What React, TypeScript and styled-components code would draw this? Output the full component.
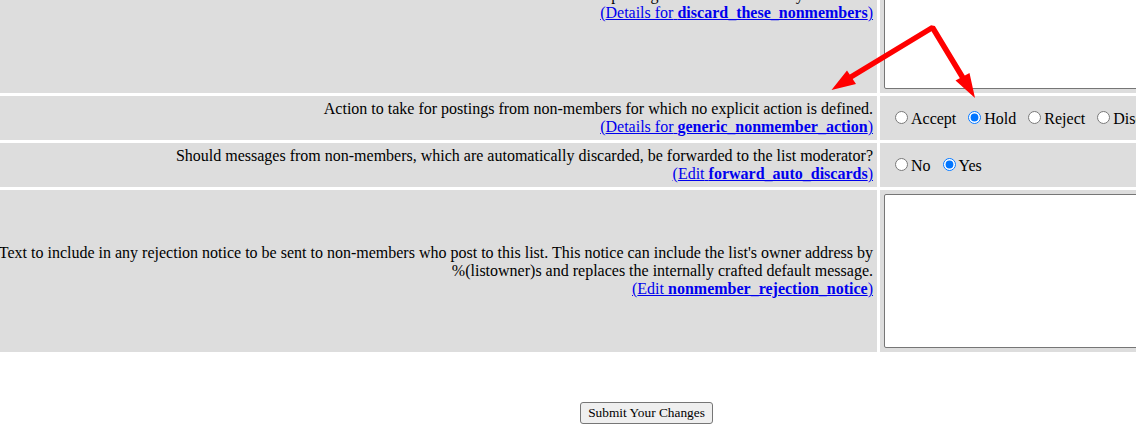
import React from 'react';
import styled, { createGlobalStyle } from 'styled-components';

const GlobalStyle = createGlobalStyle`
  body {
    margin: 0;
    background: #ffffff;
    color: #000000;
    font: 16px/18px "Liberation Serif", "Times New Roman", serif;
  }
`;

const Page = styled.main`
  position: relative;
  overflow: hidden;
  padding-bottom: 8px;
`;

/* The options sheet is wider than the window and scrolled past its top. */
const Sheet = styled.form`
  margin: -88px -169px 0 -12px;
`;

const OptionsTable = styled.table`
  width: 100%;
  table-layout: fixed;
  border-collapse: separate;
  border-spacing: 3px;
`;

const ControlColumn = styled.col`
  width: 422px;
`;

const Cell = styled.td`
  padding: 4px;
  background: #dddddd;
  vertical-align: middle;
`;

const Description = styled(Cell)`
  text-align: right;
`;

const HelpLink = styled.a`
  color: #0000ee;
  text-decoration: underline;
`;

const TextBox = styled.textarea<{ $height: number }>`
  display: block;
  box-sizing: border-box;
  width: 100%;
  height: ${({ $height }) => $height}px;
  margin: 0;
  padding: 2px;
  border: 1px solid #767676;
  border-radius: 2px;
  background: #ffffff;
  font: 13px "Liberation Mono", monospace;
  resize: none;
`;

const Choices = styled.div`
  display: flex;
  gap: 7px;
  padding-left: 6px;
`;

const Choice = styled.label`
  white-space: nowrap;
`;

const Radio = styled.input`
  width: 13px;
  height: 13px;
  margin: 3px 3px 0 5px;
`;

const Actions = styled.div`
  display: flex;
  justify-content: center;
  margin-top: 47px;
`;

const SubmitButton = styled.button`
  height: 22px;
  padding: 0 7px;
  border: 1px solid #767676;
  border-radius: 3px;
  background: #efefef;
  color: #000000;
  font-family: "Liberation Serif", "Times New Roman", serif;
`;

const Arrows = styled.svg`
  position: absolute;
  top: 20px;
  left: 828px;
  pointer-events: none;
`;

function Help({ verb, name }: { verb: string; name: string }) {
  return (
    <HelpLink href={`#${name}`}>
      ({verb} <b>{name}</b>)
    </HelpLink>
  );
}

function RadioGroup({ name, label, options, selected }: {
  name: string;
  label: string;
  options: string[];
  selected: string;
}) {
  return (
    <Choices role="radiogroup" aria-label={label}>
      {options.map((option) => (
        <Choice key={option}>
          <Radio type="radio" name={name} value={option} defaultChecked={option === selected} />
          {option}
        </Choice>
      ))}
    </Choices>
  );
}

export default function App() {
  return (
    <>
      <GlobalStyle />
      <Page>
        <Sheet onSubmit={(event) => event.preventDefault()}>
          <OptionsTable>
            <colgroup>
              <col />
              <ControlColumn />
            </colgroup>
            <tbody>
              <tr>
                <Description>
                  <label htmlFor="discard">
                    List of non-member addresses whose postings will be automatically discarded.
                  </label>
                  <br />
                  <Help verb="Details for" name="discard_these_nonmembers" />
                </Description>
                <Cell>
                  <TextBox id="discard" $height={170} />
                </Cell>
              </tr>
              <tr>
                <Description>
                  Action to take for postings from non-members for which no explicit action is defined.
                  <br />
                  <Help verb="Details for" name="generic_nonmember_action" />
                </Description>
                <Cell>
                  <RadioGroup
                    name="generic_nonmember_action"
                    label="Action for non-member postings"
                    options={['Accept', 'Hold', 'Reject', 'Discard']}
                    selected="Hold"
                  />
                </Cell>
              </tr>
              <tr>
                <Description>
                  Should messages from non-members, which are automatically discarded, be forwarded to the list moderator?
                  <br />
                  <Help verb="Edit" name="forward_auto_discards" />
                </Description>
                <Cell>
                  <RadioGroup
                    name="forward_auto_discards"
                    label="Forward discarded messages"
                    options={['No', 'Yes']}
                    selected="Yes"
                  />
                </Cell>
              </tr>
              <tr>
                <Description>
                  <label htmlFor="rejection">
                    Text to include in any rejection notice to be sent to non-members who post to this list. This
                    notice can include the list's owner address by %(listowner)s and replaces the internally crafted
                    default message.
                  </label>
                  <br />
                  <Help verb="Edit" name="nonmember_rejection_notice" />
                </Description>
                <Cell>
                  <TextBox id="rejection" $height={154} />
                </Cell>
              </tr>
            </tbody>
          </OptionsTable>
          <Actions>
            <SubmitButton type="submit">Submit Your Changes</SubmitButton>
          </Actions>
        </Sheet>
        <Arrows width="152" height="82" viewBox="828 20 152 82" aria-hidden="true">
          <path d="M850 77.5 L932.5 27.5 L963 78" fill="none" stroke="#ff0000" strokeWidth="5.5" strokeLinejoin="bevel" />
          <path d="M831.5 90 L847 70.5 L856 84 Z M975 98 L955.5 80.5 L969.5 73 Z" fill="#ff0000" />
        </Arrows>
      </Page>
    </>
  );
}
